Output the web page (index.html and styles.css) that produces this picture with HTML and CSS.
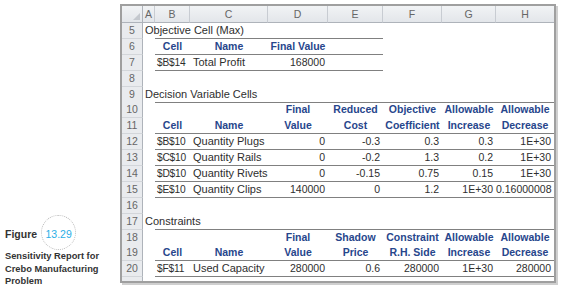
FILE: index.html
```html
<!DOCTYPE html>
<html>
<head>
<meta charset="utf-8">
<link rel="stylesheet" href="styles.css">
</head>
<body>
<div class="page">
  <div class="caption">
    <div class="fig-row"><span class="fig-label">Figure</span><span class="fig-num">13.29</span></div>
    <div class="fig-title">Sensitivity Report for<br>Crebo Manufacturing<br>Problem</div>
  </div>
  <div class="sheet">
    <div class="row head">
      <div class="corner"><span class="tri"></span></div>
      <div class="ch">A</div><div class="ch">B</div><div class="ch">C</div><div class="ch">D</div><div class="ch">E</div><div class="ch">F</div><div class="ch">G</div><div class="ch last">H</div>
    </div>
    <div class="row">
      <div class="rn">5</div><div class="c title">Objective Cell (Max)</div><div class="c ln"></div><div class="c ln"></div><div class="c ln"></div><div class="c ln"></div><div class="c"></div><div class="c"></div><div class="c"></div>
    </div>
    <div class="row">
      <div class="rn">6</div><div class="c"></div><div class="c ln hd">Cell</div><div class="c ln hd">Name</div><div class="c ln hd">Final Value</div><div class="c ln"></div><div class="c"></div><div class="c"></div><div class="c"></div>
    </div>
    <div class="row">
      <div class="rn">7</div><div class="c"></div><div class="c ln ref">$B$14</div><div class="c ln name">Total Profit</div><div class="c ln num">168000</div><div class="c ln"></div><div class="c"></div><div class="c"></div><div class="c"></div>
    </div>
    <div class="row">
      <div class="rn">8</div><div class="c"></div><div class="c"></div><div class="c"></div><div class="c"></div><div class="c"></div><div class="c"></div><div class="c"></div><div class="c"></div>
    </div>
    <div class="row">
      <div class="rn">9</div><div class="c title">Decision Variable Cells</div><div class="c ln"></div><div class="c ln"></div><div class="c ln"></div><div class="c ln"></div><div class="c ln"></div><div class="c ln"></div><div class="c ln"></div>
    </div>
    <div class="row">
      <div class="rn">10</div><div class="c"></div><div class="c"></div><div class="c"></div><div class="c hd">Final</div><div class="c hd">Reduced</div><div class="c hd">Objective</div><div class="c hd">Allowable</div><div class="c hd">Allowable</div>
    </div>
    <div class="row">
      <div class="rn">11</div><div class="c"></div><div class="c ln hd">Cell</div><div class="c ln hd">Name</div><div class="c ln hd">Value</div><div class="c ln hd">Cost</div><div class="c ln hd">Coefficient</div><div class="c ln hd">Increase</div><div class="c ln hd">Decrease</div>
    </div>
    <div class="row">
      <div class="rn">12</div><div class="c"></div><div class="c ln ref">$B$10</div><div class="c ln name">Quantity Plugs</div><div class="c ln num">0</div><div class="c ln num">-0.3</div><div class="c ln num">0.3</div><div class="c ln num">0.3</div><div class="c ln num">1E+30</div>
    </div>
    <div class="row">
      <div class="rn">13</div><div class="c"></div><div class="c ln ref">$C$10</div><div class="c ln name">Quantity Rails</div><div class="c ln num">0</div><div class="c ln num">-0.2</div><div class="c ln num">1.3</div><div class="c ln num">0.2</div><div class="c ln num">1E+30</div>
    </div>
    <div class="row">
      <div class="rn">14</div><div class="c"></div><div class="c ln ref">$D$10</div><div class="c ln name">Quantity Rivets</div><div class="c ln num">0</div><div class="c ln num">-0.15</div><div class="c ln num">0.75</div><div class="c ln num">0.15</div><div class="c ln num">1E+30</div>
    </div>
    <div class="row">
      <div class="rn">15</div><div class="c"></div><div class="c ln ref">$E$10</div><div class="c ln name">Quantity Clips</div><div class="c ln num">140000</div><div class="c ln num">0</div><div class="c ln num">1.2</div><div class="c ln num">1E+30</div><div class="c ln num">0.16000008</div>
    </div>
    <div class="row">
      <div class="rn">16</div><div class="c"></div><div class="c"></div><div class="c"></div><div class="c"></div><div class="c"></div><div class="c"></div><div class="c"></div><div class="c"></div>
    </div>
    <div class="row">
      <div class="rn">17</div><div class="c title">Constraints</div><div class="c ln"></div><div class="c ln"></div><div class="c ln"></div><div class="c ln"></div><div class="c ln"></div><div class="c ln"></div><div class="c ln"></div>
    </div>
    <div class="row">
      <div class="rn">18</div><div class="c"></div><div class="c"></div><div class="c"></div><div class="c hd">Final</div><div class="c hd">Shadow</div><div class="c hd">Constraint</div><div class="c hd">Allowable</div><div class="c hd">Allowable</div>
    </div>
    <div class="row">
      <div class="rn">19</div><div class="c"></div><div class="c ln hd">Cell</div><div class="c ln hd">Name</div><div class="c ln hd">Value</div><div class="c ln hd">Price</div><div class="c ln hd">R.H. Side</div><div class="c ln hd">Increase</div><div class="c ln hd">Decrease</div>
    </div>
    <div class="row">
      <div class="rn">20</div><div class="c"></div><div class="c ln ref">$F$11</div><div class="c ln name">Used Capacity</div><div class="c ln num">280000</div><div class="c ln num">0.6</div><div class="c ln num">280000</div><div class="c ln num">1E+30</div><div class="c ln num">280000</div>
    </div>
    <div class="row tail">
      <div class="rn"></div><div class="c"></div>
    </div>
  </div>
</div>
</body>
</html>
```
FILE: styles.css
```css
html, body {
  margin: 0;
  padding: 0;
  background: #ffffff;
}
.page {
  display: flex;
  width: 565px;
  height: 289px;
  overflow: hidden;
}
.caption {
  width: 120px;
  flex: none;
  padding-top: 215px;
  box-sizing: border-box;
  font-family: "Liberation Sans", Arial, sans-serif;
  color: #333333;
}
.fig-row {
  display: flex;
  align-items: center;
  height: 34px;
  padding-left: 5px;
}
.fig-label {
  font-weight: bold;
  font-size: 10.5px;
  padding-top: 3px;
}
.fig-num {
  width: 35px;
  height: 35px;
  margin-left: 4px;
  box-sizing: border-box;
  border: 1.5px dotted #bdbdbd;
  border-radius: 50%;
  display: flex;
  align-items: center;
  justify-content: center;
  font-size: 10.5px;
  color: #2aaee6;
  padding-top: 4px;
}
.fig-title {
  margin-top: 1px;
  padding-left: 5px;
  font-weight: bold;
  font-size: 9.3px;
  line-height: 12.5px;
}
.sheet {
  margin-top: 4px;
  align-self: flex-start;
  border: 2px solid #9f9f9f;
  box-shadow: 2px 2px 0 #cfcfcf;
  background: #ffffff;
  font-family: "Liberation Sans", Arial, sans-serif;
  font-size: 11px;
  color: #2e2e2e;
}
.row {
  display: grid;
  grid-template-columns: 21px 12px 35px 78px 60px 55px 59px 54px 58px;
  height: 15.9px;
}
.row.head {
  height: 17px;
}
.row.tail {
  height: 4px;
}
.corner, .ch {
  background: linear-gradient(#f1f3f5, #e3e6ea);
  border-right: 1px solid #c8ccd2;
  border-bottom: 1px solid #aeb3ba;
  box-sizing: border-box;
  color: #666666;
  font-size: 10.5px;
  line-height: 16px;
  text-align: center;
}
.ch.last {
  border-right: none;
}
.corner {
  position: relative;
  border-right: 1px solid #aeb3ba;
}
.tri {
  position: absolute;
  right: 2px;
  bottom: 2px;
  width: 0;
  height: 0;
  border-left: 7px solid transparent;
  border-bottom: 7px solid #c4c8ce;
}
.rn {
  background: #e9ebee;
  border-right: 1px solid #aeb3ba;
  border-bottom: 1px solid #d3d6da;
  box-sizing: border-box;
  color: #666666;
  font-size: 10.5px;
  line-height: 15px;
  text-align: center;
}
.tail .rn {
  border-bottom: none;
}
.c {
  box-sizing: border-box;
  line-height: 15px;
  white-space: nowrap;
  padding-left: 2px;
  overflow: visible;
}
.title {
  padding-left: 2px;
}
.ref {
  font-size: 10.2px;
  letter-spacing: -0.2px;
}
.name {
  padding-left: 3px;
}
.ln {
  border-bottom: 1px solid #808080;
}
.hd {
  font-weight: bold;
  font-size: 10.5px;
  color: #27468c;
  text-align: center;
  padding-left: 0;
}
.num {
  font-size: 10.5px;
  text-align: right;
  padding-left: 0;
  padding-right: 3px;
}
```
